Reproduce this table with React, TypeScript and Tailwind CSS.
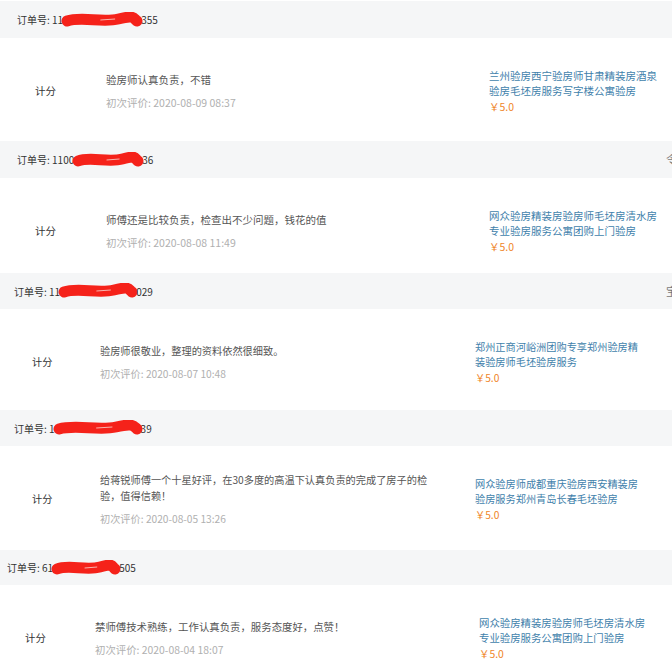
const font = { fontFamily: '"Noto Sans CJK SC", "Noto Sans", sans-serif' };

type Review = {
  headH: string;
  headPl: string;
  prefix: string;
  mask: number;
  suffix: string;
  frag?: string;
  bodyH: string;
  size: string;
  scoreCol: string;
  commentCol: string;
  commentW: string;
  productW: string;
  comment: string;
  date: string;
  product: string;
};

const reviews: Review[] = [
  {
    headH: 'h-[37px] mt-px',
    headPl: 'pl-[17px]',
    prefix: '11',
    mask: 82,
    suffix: '355',
    bodyH: 'h-[103px]',
    size: 'text-[10.5px]',
    scoreCol: 'w-[106px] pl-[35px]',
    commentCol: 'w-[383px]',
    commentW: 'w-[370px]',
    productW: 'w-[172px]',
    comment: '验房师认真负责，不错',
    date: '2020-08-09 08:37',
    product: '兰州验房西宁验房师甘肃精装房酒泉验房毛坯房服务写字楼公寓验房',
  },
  {
    headH: 'h-[37px]',
    headPl: 'pl-[17px]',
    prefix: '1100',
    mask: 72,
    suffix: '36',
    frag: '令',
    bodyH: 'h-[95px]',
    size: 'text-[10.5px]',
    scoreCol: 'w-[106px] pl-[35px]',
    commentCol: 'w-[383px]',
    commentW: 'w-[370px]',
    productW: 'w-[172px]',
    comment: '师傅还是比较负责，检查出不少问题，钱花的值',
    date: '2020-08-08 11:49',
    product: '网众验房精装房验房师毛坯房清水房专业验房服务公寓团购上门验房',
  },
  {
    headH: 'h-[36px]',
    headPl: 'pl-[14px]',
    prefix: '11',
    mask: 80,
    suffix: '029',
    frag: '宝',
    bodyH: 'h-[101px]',
    size: 'text-[10.2px]',
    scoreCol: 'w-[100px] pl-[32px]',
    commentCol: 'w-[375px]',
    commentW: 'w-[336px]',
    productW: 'w-[166px]',
    comment: '验房师很敬业，整理的资料依然很细致。',
    date: '2020-08-07 10:48',
    product: '郑州正商河峪洲团购专享郑州验房精装验房师毛坯验房服务',
  },
  {
    headH: 'h-[36px]',
    headPl: 'pl-[14px]',
    prefix: '1',
    mask: 90,
    suffix: '39',
    bodyH: 'h-[104px]',
    size: 'text-[10.2px]',
    scoreCol: 'w-[100px] pl-[32px]',
    commentCol: 'w-[375px]',
    commentW: 'w-[336px]',
    productW: 'w-[166px]',
    comment: '给蒋锐师傅一个十星好评，在30多度的高温下认真负责的完成了房子的检验，值得信赖！',
    date: '2020-08-05 13:26',
    product: '网众验房师成都重庆验房西安精装房验房服务郑州青岛长春毛坯验房',
  },
  {
    headH: 'h-[35px]',
    headPl: 'pl-[7px]',
    prefix: '61',
    mask: 70,
    suffix: '505',
    bodyH: 'h-[90px]',
    size: 'text-[10.4px]',
    scoreCol: 'w-[95px] pl-[25px]',
    commentCol: 'w-[384px]',
    commentW: 'w-[370px]',
    productW: 'w-[170px]',
    comment: '禁师傅技术熟练，工作认真负责，服务态度好，点赞！',
    date: '2020-08-04 18:07',
    product: '网众验房精装房验房师毛坯房清水房专业验房服务公寓团购上门验房',
  },
];

// red marker stroke hiding the middle digits
function Scribble({ width }: { width: number }) {
  const w = width;
  return (
    <svg width={w} height={16} viewBox={`0 0 ${w} 16`} className="-mx-[2px] inline-block align-middle">
      <path
        d={`M6 9 C ${w * 0.25} 4, ${w * 0.5} 11, ${w * 0.7} 7 S ${w - 10} 6, ${w - 6} 9`}
        stroke="#f5221a"
        strokeWidth={11}
        strokeLinecap="round"
        fill="none"
      />
      <path d={`M${w * 0.48} 8 L ${w * 0.66} 7`} stroke="#f8b3ad" strokeWidth={1} fill="none" />
    </svg>
  );
}

function ReviewBlock({ r }: { r: Review }) {
  return (
    <div>
      <div className={`flex items-center justify-between overflow-hidden bg-[#f5f6f7] ${r.headH} ${r.headPl}`}>
        <div className="flex items-center text-[10px] text-[#333]">
          <span>订单号: {r.prefix}</span>
          <Scribble width={r.mask} />
          <span>{r.suffix}</span>
        </div>
        {r.frag && <span className="-mr-[5px] text-[11px] text-[#777]">{r.frag}</span>}
      </div>
      <div className={`overflow-hidden bg-white ${r.bodyH}`}>
        <div className={`flex h-[106px] items-center ${r.size}`}>
          <div className={`shrink-0 text-[#333] ${r.scoreCol}`}>计分</div>
          <div className={`shrink-0 ${r.commentCol}`}>
            <p className={`leading-[16px] text-[#555] ${r.commentW}`}>{r.comment}</p>
            <p className="mt-[7px] leading-[16px] text-[#b0b0b0]">初次评价: {r.date}</p>
          </div>
          <div className={`shrink-0 leading-[15.5px] ${r.productW}`}>
            <p className="text-[#3f7fab]">{r.product}</p>
            <p className="text-[#ef8529]">￥5.0</p>
          </div>
        </div>
      </div>
    </div>
  );
}

export default function App() {
  return (
    <div className="h-[669px] w-[672px] overflow-hidden bg-white" style={font}>
      {reviews.map((r, i) => (
        <ReviewBlock key={i} r={r} />
      ))}
    </div>
  );
}
